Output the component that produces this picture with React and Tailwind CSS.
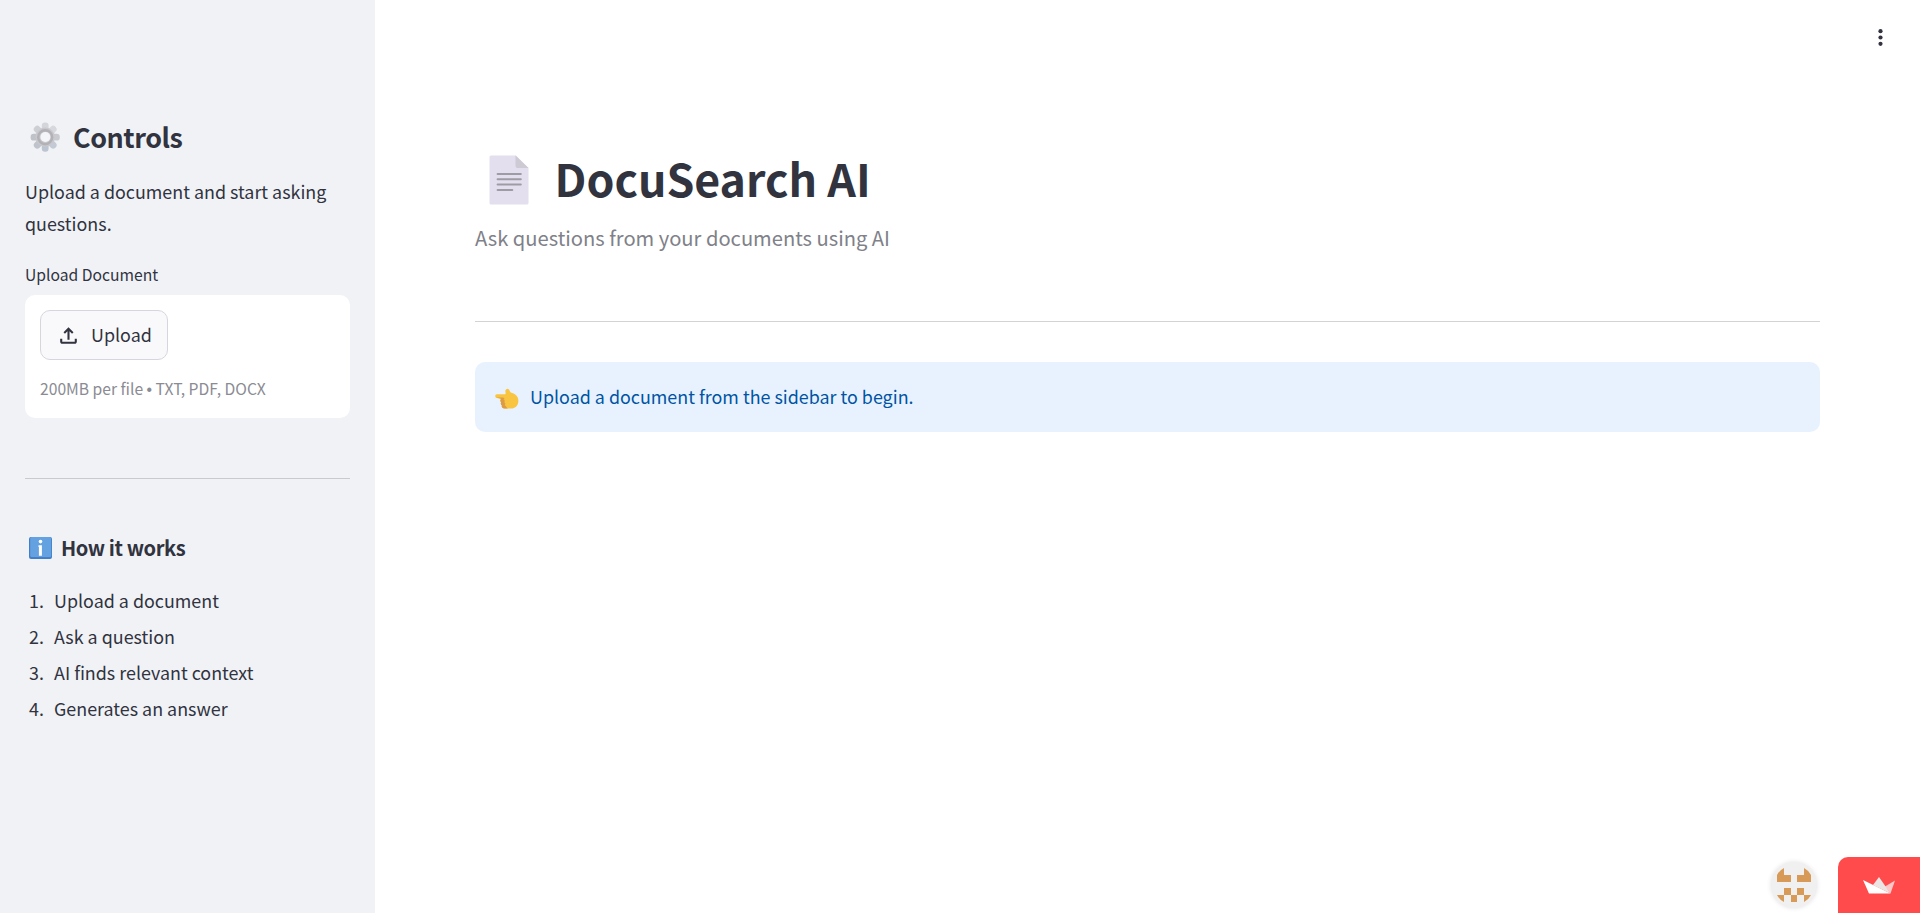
const steps = [
  "Upload a document",
  "Ask a question",
  "AI finds relevant context",
  "Generates an answer"
]

function GearIcon() {
  const teeth = [0, 45, 90, 135, 180, 225, 270, 315]
  const fills = ["#d3d5da", "#d6d8de", "#c8cad0", "#c3cad6", "#bcc4d1", "#bfc3cb", "#bfc2c9", "#cdcfd4"]

  return (
    <svg viewBox="0 0 30 30" className="w-[30px] h-[30px] shrink-0">
      {teeth.map((angle, i) => (
        <rect
          key={angle}
          x="11.8"
          y="0.6"
          width="6.8"
          height="9"
          rx="3.2"
          fill={fills[i]}
          transform={`rotate(${angle} 15.2 15.2)`}
        />
      ))}
      <circle cx="15.2" cy="15.2" r="9.6" fill="#c8c8cd" />
      <circle cx="15.2" cy="15.2" r="7" fill="none" stroke="#b2b2b6" strokeWidth="2.4" />
      <circle cx="15.4" cy="15" r="5" fill="#f4f5f8" />
    </svg>
  )
}

function DocumentIcon() {
  return (
    <svg viewBox="0 0 40 50" className="w-10 h-[50px] shrink-0">
      <path d="M2 .5h25L39.5 13v35a1.5 1.5 0 0 1-1.5 1.5H2A1.5 1.5 0 0 1 .5 48V2A1.5 1.5 0 0 1 2 .5Z" fill="#e4dfee" />
      <path d="M26.5.5 39.5 13h-11a2 2 0 0 1-2-2Z" fill="#cdcad3" />
      <path d="M8.6 18.9h23.2M8.6 24.3h23.2M8.6 29.6h23.2M8.6 34.9h14.7" stroke="#9e9ca3" strokeWidth="2" strokeLinecap="round" />
    </svg>
  )
}

function InfoIcon() {
  return (
    <svg viewBox="0 0 23 22" className="w-[23px] h-[22px] shrink-0">
      <rect width="23" height="22" rx="2" fill="#427fc6" />
      <rect x="1.2" width="21" height="20" rx="1.5" fill="#64a1e1" />
      <circle cx="11.5" cy="4.6" r="1.8" fill="#fff" />
      <path d="M9.5 8.2h3.4v10.6h-3V10h-.4Z" fill="#fff" />
    </svg>
  )
}

function PointLeftIcon() {
  return (
    <svg viewBox="0 0 24 21" className="w-6 h-[21px] mt-[3px] shrink-0">
      <path
        d="M1.6 6.2h8.6c.8-.5.2-1.8.1-3C10.2 1.3 12.8-.2 14 1.6c.6 1 .8 2.2 1.8 3 3.9 1.1 7.6 3.3 7.6 8.1 0 4.7-3 7.8-7.5 7.8H9.5c-2 0-3.3-1.4-2.6-3-1.2-.9-1.4-2.1-.8-3.2-1-.9-1-2.4-.1-3.5L1.6 9.9C-.2 9.9-.2 6.2 1.6 6.2Z"
        fill="#f9c541"
      />
      <path
        d="M1.2 9.5h6.6c1.8 0 2.2 1.4.7 1.8 1.5.5 1.5 2.3.6 2.9 1.6.6 1.6 2.2.4 2.9 1.2.6 1.8 2.2 3.3 3.4H9.5c-2 0-3.3-1.4-2.6-3-1.2-.9-1.4-2.1-.8-3.2-1-.9-1-2.4-.1-3.5Z"
        fill="#dd9b45"
      />
    </svg>
  )
}

function UploadIcon() {
  return (
    <svg viewBox="0 0 24 24" className="w-[25px] h-[25px]" fill="#31333f">
      <path d="M12 4 7.2 8.8l1.4 1.4L11 7.8V16h2V7.8l2.4 2.4 1.4-1.4ZM4 15v3c0 1.1.9 2 2 2h12c1.1 0 2-.9 2-2v-3h-2v3H6v-3Z" />
    </svg>
  )
}

function MenuDots() {
  return (
    <svg viewBox="0 0 25 25" className="w-[25px] h-[25px]" fill="#31333f">
      <circle cx="12.5" cy="6.2" r="2.1" />
      <circle cx="12.5" cy="12.5" r="2.1" />
      <circle cx="12.5" cy="18.8" r="2.1" />
    </svg>
  )
}

function Avatar() {
  return (
    <div className="w-[46px] h-[46px] rounded-full bg-[#f0f0f0] shadow-[0_0_5px_rgba(0,0,0,0.12)] flex items-center justify-center">
      <svg viewBox="0 0 34 34" className="w-[34px] h-[34px]" fill="#d79a57">
        <path d="M0 7Q2.2 2.5 7 0v7h7v7H0ZM34 7Q31.8 2.5 27 0v7h-7v7h14ZM7 20h7v7h6v-7h7v7h7Q31.8 31.5 27 34v-7h-7v7h-6v-7H7v7Q2.2 31.5 0 27h7Z" />
      </svg>
    </div>
  )
}

function Crown() {
  return (
    <svg viewBox="0 0 32 17" className="w-8 h-[17px]">
      <path d="M22 9.5 32 3.5 27.5 16.5Z" fill="#ffc7c7" />
      <path d="M10 8 16 0l11.5 16.5Z" fill="#ebe5e5" />
      <path d="M0 3 27.5 16.5H6Z" fill="#fff" />
    </svg>
  )
}

function Sidebar() {
  return (
    <aside className="w-[375px] h-full shrink-0 bg-[#f0f2f6] px-[25px] pt-[119px]">
      <div className="flex items-center h-9 pl-[5px]">
        <GearIcon />
        <h2 className="ml-[13px] text-[26.9px] leading-9 font-semibold tracking-[-0.45px]">Controls</h2>
      </div>

      <p className="mt-[20px] text-[17.9px] leading-8">
        Upload a document and start asking questions.
      </p>

      <p className="mt-[22px] text-[15.67px] leading-7">Upload Document</p>

      <div className="mt-[6px] h-[123px] rounded-[10px] bg-white p-[15px]">
        <button className="flex items-center w-32 h-[50px] rounded-[10px] border border-[#d6d6df] bg-[#f9f9fb] pl-[15px] text-[17.9px]">
          <UploadIcon />
          <span className="ml-[10px] -mt-px">Upload</span>
        </button>
        <p className="mt-[15px] text-[15.67px] leading-7 text-[#8a8b93]">
          200MB per file <span className="font-['Liberation_Sans'] leading-none">•</span> TXT, PDF, DOCX
        </p>
      </div>

      <hr className="mt-[60px] border-t border-[#c8cad0]" />

      <div className="flex items-center h-[30px] mt-[54px] pl-1">
        <InfoIcon />
        <h4 className="ml-[9px] text-[20.1px] leading-[30px] font-semibold tracking-[-0.42px]">How it works</h4>
      </div>

      <ol className="mt-[19px] text-[17.9px] leading-9">
        {steps.map((step, i) => (
          <li key={step} className="flex pl-1">
            <span className="w-[25px]">{i + 1}.</span>
            <span>{step}</span>
          </li>
        ))}
      </ol>
    </aside>
  )
}

export default function App() {
  return (
    <div className="relative flex w-full h-screen overflow-hidden bg-white text-[#31333f] font-['Source_Sans_Pro','Noto_Sans_CJK_SC',sans-serif]">
      <Sidebar />

      <main className="flex-1 pl-[100px] pr-[100px] pt-[147px]">
        <div className="flex items-center h-[62px] pl-[14px]">
          <div className="mt-[3px]">
            <DocumentIcon />
          </div>
          <h1 className="ml-[25.5px] text-[44.7px] leading-[62px] font-bold">DocuSearch AI</h1>
        </div>
        <p className="mt-[14px] text-[20.15px] leading-[30px] text-[#808189]">
          Ask questions from your documents using AI
        </p>

        <hr className="mt-[68px] border-t border-[#d3d3d6]" />

        <div className="flex items-center h-[70px] mt-[40px] pl-5 rounded-[10px] bg-[#e8f2ff] text-[17.9px] text-[#0054a3]">
          <PointLeftIcon />
          <span className="ml-[11px] -mt-px">Upload a document from the sidebar to begin.</span>
        </div>
      </main>

      <button className="absolute top-[25px] right-[27px]">
        <MenuDots />
      </button>

      <div className="absolute right-0 bottom-0 flex items-start">
        <div className="mt-[5px] mr-[21px]">
          <Avatar />
        </div>
        <div className="flex w-[82px] h-14 justify-center pt-[20px] rounded-tl-[10px] bg-[#ff4b4b]">
          <Crown />
        </div>
      </div>
    </div>
  )
}
